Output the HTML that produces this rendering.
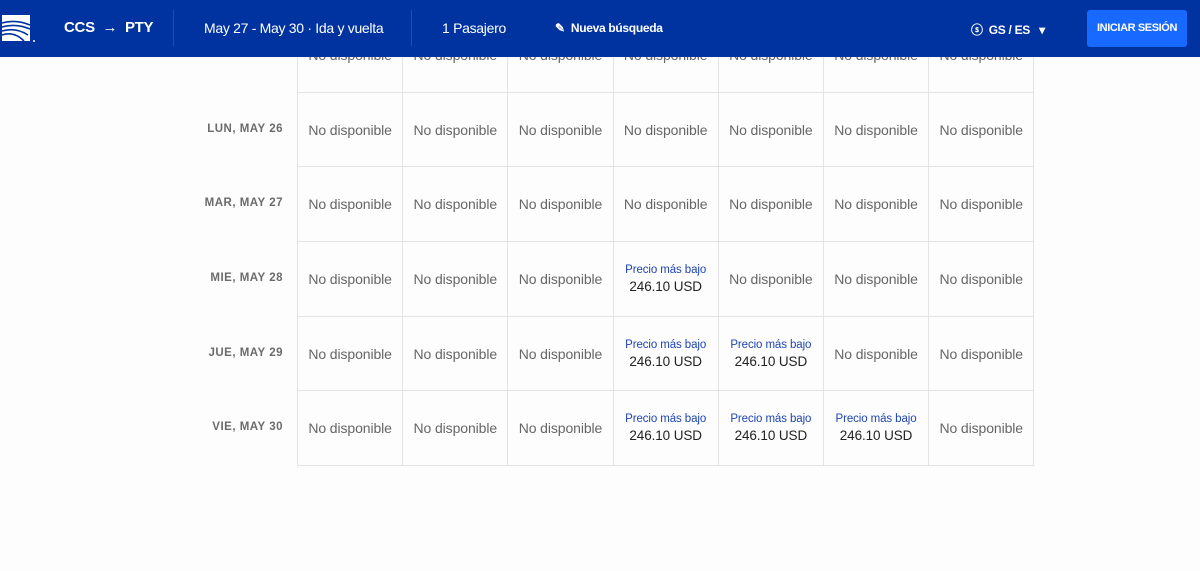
<!DOCTYPE html>
<html><head><meta charset="utf-8"><style>
*{margin:0;padding:0;box-sizing:border-box}
body{width:1200px;height:571px;background:#fdfdfd;font-family:"Liberation Sans",sans-serif;position:relative;overflow:hidden}
.hdr{position:absolute;left:0;top:0;width:1200px;height:57px;background:#0033a0;color:#fff;z-index:2}
.hdr span{position:absolute;top:20px;font-size:14px;white-space:nowrap;letter-spacing:-0.3px}
.sep{position:absolute;top:10px;width:1px;height:36px;background:#1f4cae}
.btn{position:absolute;left:1087px;top:10px;width:100px;height:37px;background:#1769ff;border-radius:3px;font-size:11px;font-weight:bold;text-align:center;line-height:37px;white-space:nowrap;letter-spacing:-0.4px}
table{position:absolute;left:297px;top:17px;border-collapse:collapse}
td{width:105.2px;height:74.7px;border:1px solid #e3e3e3;text-align:center;font-size:14px;color:#666;vertical-align:middle;letter-spacing:-0.1px}
.lab{position:absolute;width:283px;text-align:right;font-size:11.5px;font-weight:bold;color:#6b6b6b;letter-spacing:.5px}
.p1{color:#1f45b0;font-size:11.5px}
.p2{color:#222;font-size:13.5px;margin-top:3px}
</style></head><body>
<div class="hdr">
<svg style="position:absolute;left:2px;top:15px" width="34" height="30"><rect x="0" y="0" width="28" height="26" fill="#fff"/><path d="M0 8 Q14 4 28 10 M0 12 Q14 8 28 14 M0 16 Q14 12 26 20 M0 20 Q12 16 22 26" stroke="#0033a0" stroke-width="1.6" fill="none"/><circle cx="32" cy="26" r="1" fill="#fff"/></svg>
<span style="left:64px;font-weight:bold;font-size:15px;top:19px">CCS &nbsp;→ &nbsp;PTY</span>
<div class="sep" style="left:173px"></div>
<span style="left:204px">May 27 - May 30 · Ida y vuelta</span>
<div class="sep" style="left:411px"></div>
<span style="left:442px">1 Pasajero</span>
<span style="left:555px;font-size:12px;font-weight:bold;top:21px">✎&nbsp; Nueva búsqueda</span>
<span style="left:971px;font-size:12px;font-weight:bold;top:21px">ⓢ&nbsp; GS / ES &nbsp; ▾</span>
<div class="btn">INICIAR SESIÓN</div>
</div>
<div class="lab" style="top:123px">LUN, MAY 26</div>
<div class="lab" style="top:197px">MAR, MAY 27</div>
<div class="lab" style="top:272px">MIE, MAY 28</div>
<div class="lab" style="top:347px">JUE, MAY 29</div>
<div class="lab" style="top:421px">VIE, MAY 30</div>
<table>
<tr><td>No disponible</td><td>No disponible</td><td>No disponible</td><td>No disponible</td><td>No disponible</td><td>No disponible</td><td>No disponible</td></tr>
<tr><td>No disponible</td><td>No disponible</td><td>No disponible</td><td>No disponible</td><td>No disponible</td><td>No disponible</td><td>No disponible</td></tr>
<tr><td>No disponible</td><td>No disponible</td><td>No disponible</td><td>No disponible</td><td>No disponible</td><td>No disponible</td><td>No disponible</td></tr>
<tr><td>No disponible</td><td>No disponible</td><td>No disponible</td><td><div class="p1">Precio más bajo</div><div class="p2">246.10 USD</div></td><td>No disponible</td><td>No disponible</td><td>No disponible</td></tr>
<tr><td>No disponible</td><td>No disponible</td><td>No disponible</td><td><div class="p1">Precio más bajo</div><div class="p2">246.10 USD</div></td><td><div class="p1">Precio más bajo</div><div class="p2">246.10 USD</div></td><td>No disponible</td><td>No disponible</td></tr>
<tr><td>No disponible</td><td>No disponible</td><td>No disponible</td><td><div class="p1">Precio más bajo</div><div class="p2">246.10 USD</div></td><td><div class="p1">Precio más bajo</div><div class="p2">246.10 USD</div></td><td><div class="p1">Precio más bajo</div><div class="p2">246.10 USD</div></td><td>No disponible</td></tr>
</table>
</body></html>
